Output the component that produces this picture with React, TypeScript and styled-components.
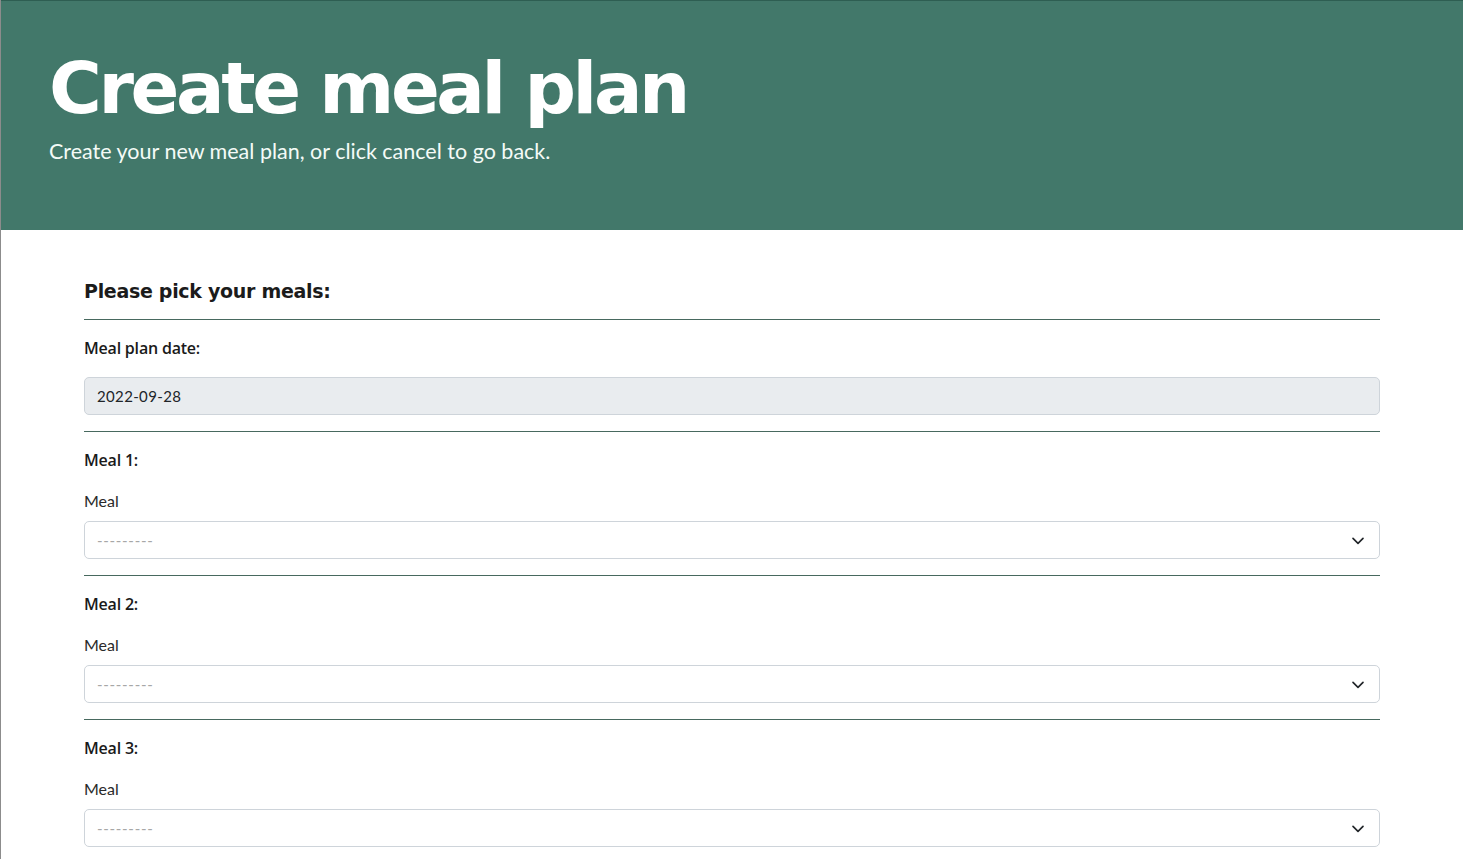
import React from "react";
import styled, { createGlobalStyle } from "styled-components";

const GREEN = "#42786a";
const BODY_FONT = `"Lato", "Noto Sans", sans-serif`;
const LABEL_FONT = `"Open Sans", "Noto Sans", sans-serif`;
const HEAD_FONT = `"DejaVu Sans", "Inter", sans-serif`;

const Global = createGlobalStyle`
  html, body { margin: 0; padding: 0; background: #fff; }
  body {
    font-family: ${BODY_FONT};
    color: #212529;
    border-left: 1px solid #8c8c8c;
    min-height: 859px;
    box-sizing: border-box;
  }
  * { box-sizing: border-box; }
`;

const Page = styled.div`
  display: flex;
  flex-direction: column;
`;

const Hero = styled.header`
  background: ${GREEN};
  height: 230px;
  border-top: 1px solid #2e5e52;
  padding: 46px 48px 0 48px;
  display: flex;
  flex-direction: column;
`;

const Title = styled.h1`
  margin: 0;
  font-family: ${HEAD_FONT};
  font-weight: 700;
  font-size: 72px;
  line-height: 82px;
  letter-spacing: -3.4px;
  color: #fff;
`;

const Subtitle = styled.p`
  margin: 7px 0 0 0;
  font-family: ${BODY_FONT};
  font-weight: 400;
  font-size: 21.5px;
  line-height: 30px;
  color: #f4fbf7;
`;

const Main = styled.main`
  width: 1296px;
  margin: 0 auto;
  padding-top: 49px;
  display: flex;
  flex-direction: column;
`;

const FormTitle = styled.h2`
  margin: 0;
  font-family: ${HEAD_FONT};
  font-weight: 700;
  font-size: 19px;
  line-height: 24px;
  letter-spacing: -0.3px;
  color: #1b1b1b;
`;

const Rule = styled.hr`
  margin: 16px 0;
  border: 0;
  border-top: 1px solid #47695f;
  opacity: 1;
  height: 0;
`;

const Section = styled.div`
  display: flex;
  flex-direction: column;
`;

const SectionLabel = styled.div`
  font-family: ${LABEL_FONT};
  font-size: 16px;
  font-weight: 600;
  line-height: 25px;
  letter-spacing: -0.2px;
  color: #1a1a1a;
`;

const FieldLabel = styled.label`
  margin-top: 16px;
  margin-bottom: 8px;
  font-size: 16px;
  font-weight: 400;
  line-height: 24px;
  color: #2a2a2a;
`;

const DateInput = styled.div`
  margin-top: 16px;
  height: 38px;
  border: 1px solid #ced4da;
  border-radius: 5px;
  background: #e9ecef;
  display: flex;
  align-items: center;
  padding: 0 12px;
  font-size: 15px;
  color: #212529;
  letter-spacing: 0.35px;
`;

const Select = styled.div`
  height: 38px;
  border: 1px solid #ced4da;
  border-radius: 5px;
  background: #fff;
  display: flex;
  align-items: center;
  justify-content: space-between;
  padding: 0 14px 0 12px;
  font-size: 15px;
  color: #a7a7a7;
`;

const Placeholder = styled.span`
  letter-spacing: 0.7px;
`;

const Chevron = () => (
  <svg width="14" height="10" viewBox="0 0 16 12" aria-hidden>
    <path
      d="M2 4l6 6 6-6"
      fill="none"
      stroke="#212529"
      strokeWidth="2"
      strokeLinecap="round"
      strokeLinejoin="round"
    />
  </svg>
);

const MealBlock = ({ n }: { n: number }) => (
  <Section>
    <SectionLabel>Meal {n}:</SectionLabel>
    <FieldLabel>Meal</FieldLabel>
    <Select>
      <Placeholder>---------</Placeholder>
      <Chevron />
    </Select>
  </Section>
);

export default function App() {
  return (
    <Page>
      <Global />
      <Hero>
        <Title>Create meal plan</Title>
        <Subtitle>Create your new meal plan, or click cancel to go back.</Subtitle>
      </Hero>
      <Main>
        <FormTitle>Please pick your meals:</FormTitle>
        <Rule />
        <Section>
          <SectionLabel>Meal plan date:</SectionLabel>
          <DateInput>2022-09-28</DateInput>
        </Section>
        <Rule />
        <MealBlock n={1} />
        <Rule />
        <MealBlock n={2} />
        <Rule />
        <MealBlock n={3} />
      </Main>
    </Page>
  );
}
